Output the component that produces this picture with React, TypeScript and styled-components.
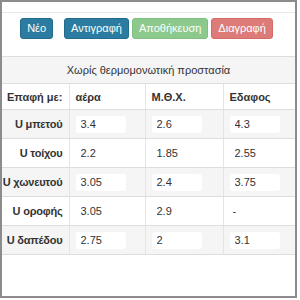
import React from 'react';
import styled, { createGlobalStyle } from 'styled-components';

const GlobalStyle = createGlobalStyle`
  body {
    margin: 0;
    background: #fff;
    font-family: "Liberation Sans", Arial, sans-serif;
    color: #333;
  }
`;

const Frame = styled.div`
  width: 297px;
  height: 298px;
  box-sizing: border-box;
  border: 2px solid #8c8c8c;
  background: #fff;
  overflow: hidden;
`;

const TopRule = styled.div`
  height: 10px;
  border-bottom: 1px solid #e8e8e8;
`;

const Toolbar = styled.div`
  display: flex;
  align-items: flex-start;
  justify-content: center;
  height: 21px;
  padding: 5px 4px 0 0;
  gap: 3px;
`;

const variants = {
  info: { bg: '#2b7ca0', border: '#236b8c' },
  success: { bg: '#8dc98d', border: '#7fbf7f' },
  danger: { bg: '#dc7b77', border: '#d36b67' },
};

const Button = styled.button<{ $variant: keyof typeof variants; $gapRight?: number }>`
  height: 21px;
  padding: 0 6px;
  margin-right: ${(p) => p.$gapRight || 0}px;
  font-family: "Liberation Sans", Arial, sans-serif;
  font-size: 11px;
  color: #fff;
  background: ${(p) => variants[p.$variant].bg};
  border: 1px solid ${(p) => variants[p.$variant].border};
  border-radius: 3px;
  line-height: 19px;
`;

const Table = styled.table`
  margin-top: 17px;
  width: 100%;
  border-collapse: collapse;
  font-size: 11px;
  table-layout: fixed;
`;

const TitleCell = styled.th`
  height: 26px;
  padding: 0;
  background: #f5f5f5;
  border-top: 1px solid #dddddd;
  border-bottom: 1px solid #dddddd;
  font-weight: normal;
  text-align: center;
`;

const Row = styled.tr<{ $striped?: boolean }>`
  background: ${(p) => (p.$striped ? '#f5f5f5' : '#fff')};
`;

const HeadCell = styled.th<{ $right?: boolean }>`
  height: 25px;
  padding: 0 6px;
  border-bottom: 1px solid #dddddd;
  border-left: 1px solid #e4e4e4;
  text-align: ${(p) => (p.$right ? 'right' : 'left')};
  font-weight: bold;
  white-space: nowrap;
  &:first-child {
    border-left: none;
    padding: 0 6px 0 0;
  }
`;

const LabelCell = styled.th`
  height: 28px;
  padding: 0 6px 0 0;
  border-bottom: 1px solid #dddddd;
  text-align: right;
  font-weight: bold;
  white-space: nowrap;
  letter-spacing: -0.2px;
`;

const Cell = styled.td`
  height: 28px;
  padding: 0 6px;
  border-bottom: 1px solid #dddddd;
  border-left: 1px solid #e4e4e4;
`;

const Field = styled.input`
  display: block;
  width: 50px;
  height: 17px;
  box-sizing: border-box;
  padding: 0 5px;
  border: none;
  border-radius: 3px;
  background: #fff;
  font-family: "Liberation Sans", Arial, sans-serif;
  font-size: 11px;
  color: #333;
  outline: none;
`;

const Plain = styled.span`
  padding-left: 3px;
`;

const rows = [
  { label: 'U μπετού', values: ['3.4', '2.6', '4.3'] },
  { label: 'U τοίχου', values: ['2.2', '1.85', '2.55'] },
  { label: 'U χωνευτού', values: ['3.05', '2.4', '3.75'] },
  { label: 'U οροφής', values: ['3.05', '2.9', '-'] },
  { label: 'U δαπέδου', values: ['2.75', '2', '3.1'] },
];

const App = () => {
  return (
    <>
      <GlobalStyle />
      <Frame>
        <TopRule />
        <Toolbar>
          <Button $variant="info" $gapRight={8}>Νέο</Button>
          <Button $variant="info">Αντιγραφή</Button>
          <Button $variant="success">Αποθήκευση</Button>
          <Button $variant="danger">Διαγραφή</Button>
        </Toolbar>
        <Table>
          <colgroup>
            <col style={{ width: 67 }} />
            <col style={{ width: 76 }} />
            <col style={{ width: 78 }} />
            <col />
          </colgroup>
          <thead>
            <tr>
              <TitleCell colSpan={4}>Χωρίς θερμομονωτική προστασία</TitleCell>
            </tr>
            <tr>
              <HeadCell $right>Επαφή με:</HeadCell>
              <HeadCell>αέρα</HeadCell>
              <HeadCell>Μ.Θ.Χ.</HeadCell>
              <HeadCell>Εδαφος</HeadCell>
            </tr>
          </thead>
          <tbody>
            {rows.map((r, i) => (
              <Row key={r.label} $striped={i % 2 === 0}>
                <LabelCell>{r.label}</LabelCell>
                {r.values.map((v, j) => (
                  <Cell key={j}>
                    {v === '-' ? <Plain>{v}</Plain> : <Field readOnly defaultValue={v} />}
                  </Cell>
                ))}
              </Row>
            ))}
          </tbody>
        </Table>
      </Frame>
    </>
  );
};

export default App;
